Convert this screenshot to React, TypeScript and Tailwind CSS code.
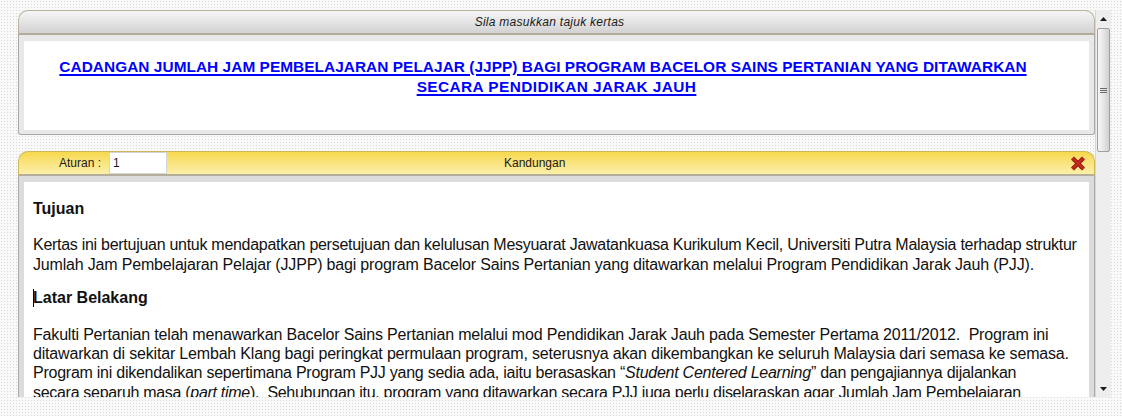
import React from "react";

function Scrollbar() {
  return (
    <div className="w-[16px] h-full bg-[#eeeeee] border-l border-[#d6d6d6] flex flex-col">
      <div className="h-[17px] flex items-center justify-center">
        <svg width="7" height="4" viewBox="0 0 7 4">
          <path d="M3.5 0 L7 4 L0 4 Z" fill="#1a1a1a" />
        </svg>
      </div>
      <div className="mt-[1px] h-[124px] mx-[1px] rounded-[2px] border border-[#a0a0a0] bg-gradient-to-r from-[#f6f6f6] via-[#e6e6e6] to-[#cfcfcf] flex flex-col items-center justify-center gap-[1px]">
        <div className="w-[7px] h-px bg-[#6a6a6a]" />
        <div className="w-[7px] h-px bg-[#6a6a6a]" />
        <div className="w-[7px] h-px bg-[#6a6a6a]" />
      </div>
      <div className="flex-1" />
      <div className="h-[17px] flex items-center justify-center">
        <svg width="7" height="4" viewBox="0 0 7 4">
          <path d="M0 0 L7 0 L3.5 4 Z" fill="#1a1a1a" />
        </svg>
      </div>
    </div>
  );
}

function CloseIcon() {
  return (
    <svg width="16" height="15" viewBox="0 0 16 15">
      <path d="M2.5 2 L13.5 13 M13.5 2 L2.5 13" stroke="#8f1810" strokeWidth="4.2" />
      <path d="M2.5 2 L13.5 13 M13.5 2 L2.5 13" stroke="#c8291e" strokeWidth="2.4" />
    </svg>
  );
}

export default function App() {
  return (
    <div className="w-[1122px] h-[416px] overflow-hidden bg-[#f9f9f9] bg-[radial-gradient(#d9d9d9_0.7px,transparent_0.9px)] bg-[size:3px_3px] pt-[10px] font-['Liberation_Sans',Arial,sans-serif] text-[#111]">
      <div className="flex h-[387px] w-[1111px]">
        <div className="flex-1 overflow-hidden pl-[18px]">
          {/* Title panel */}
          <div className="h-[25px] rounded-t-[10px] border border-[#b9b29c] border-b-2 border-b-[#b2aa9a] bg-gradient-to-b from-[#f6f6f6] to-[#d2d2d2] flex items-center justify-center pr-[14px] text-[12px] italic tracking-[0.27px] text-[#1a1a1a]">
            Sila masukkan tajuk kertas
          </div>
          <div className="h-[100px] border border-t-0 border-[#a9a9a9] rounded-b-[3px] bg-[#e8e8e8] pt-[6px] px-[5px] pb-[4px]">
            <div className="h-full bg-white pt-[16px] text-center text-[15.4px] leading-[20px] font-bold text-[#0000ff] underline decoration-[1.6px] underline-offset-[2px]">
              <div className="pr-[27px] whitespace-nowrap tracking-[0.05px]">
                CADANGAN JUMLAH JAM PEMBELAJARAN PELAJAR (JJPP) BAGI PROGRAM BACELOR SAINS PERTANIAN YANG DITAWARKAN
              </div>
              <div className="whitespace-nowrap tracking-[0.42px]">SECARA PENDIDIKAN JARAK JAUH</div>
            </div>
          </div>

          {/* Content panel */}
          <div className="mt-[16px] h-[25px] rounded-t-[10px] border border-[#cdb85a] border-b-2 border-b-[#b5ae9c] bg-gradient-to-b from-[#f7d94a] to-[#fcefa8] flex items-center text-[12px] text-[#1a1a1a]">
            <div className="pl-[40px] w-[90px] shrink-0">Aturan :</div>
            <div className="w-[58px] h-[22px] bg-white border border-[#d4d4d4] pl-[3px] flex items-center text-[12px] shrink-0">
              1
            </div>
            <div className="ml-[337px] flex-1">Kandungan</div>
            <div className="mr-[8px] flex items-center">
              <CloseIcon />
            </div>
          </div>
          <div className="h-[300px] border border-t-0 border-[#a9a9a9] bg-[#dcdcdc] pt-[6px] px-[5px]">
            <div className="h-full bg-white pl-[9px] pt-[17px] text-[16px] leading-[19.4px] whitespace-nowrap">
              <div className="font-bold">Tujuan</div>
              <div className="mt-[17px]">
                <div className="tracking-[-0.28px]">
                  Kertas ini bertujuan untuk mendapatkan persetujuan dan kelulusan Mesyuarat Jawatankuasa Kurikulum Kecil, Universiti Putra Malaysia terhadap struktur
                </div>
                <div className="tracking-[-0.18px]">
                  Jumlah Jam Pembelajaran Pelajar (JJPP) bagi program Bacelor Sains Pertanian yang ditawarkan melalui Program Pendidikan Jarak Jauh (PJJ).
                </div>
              </div>
              <div className="mt-[14px] font-bold">
                <span className="inline-block w-px h-[18px] bg-black align-[-4px] -mr-px" />
                Latar Belakang
              </div>
              <div className="mt-[17px]">
                <div className="tracking-[-0.18px]">
                  Fakulti Pertanian telah menawarkan Bacelor Sains Pertanian melalui mod Pendidikan Jarak Jauh pada Semester Pertama 2011/2012.{"\u00a0 "}Program ini
                </div>
                <div className="tracking-[-0.18px]">
                  ditawarkan di sekitar Lembah Klang bagi peringkat permulaan program, seterusnya akan dikembangkan ke seluruh Malaysia dari semasa ke semasa.
                </div>
                <div className="tracking-[-0.25px]">
                  Program ini dikendalikan sepertimana Program PJJ yang sedia ada, iaitu berasaskan “<i>Student Centered Learning</i>” dan pengajiannya dijalankan
                </div>
                <div className="tracking-[-0.3px]">
                  secara separuh masa (<i>part time</i>).{"\u00a0 "}Sehubungan itu, program yang ditawarkan secara PJJ juga perlu diselaraskan agar Jumlah Jam Pembelajaran
                </div>
              </div>
            </div>
          </div>
        </div>
        <Scrollbar />
      </div>
    </div>
  );
}
